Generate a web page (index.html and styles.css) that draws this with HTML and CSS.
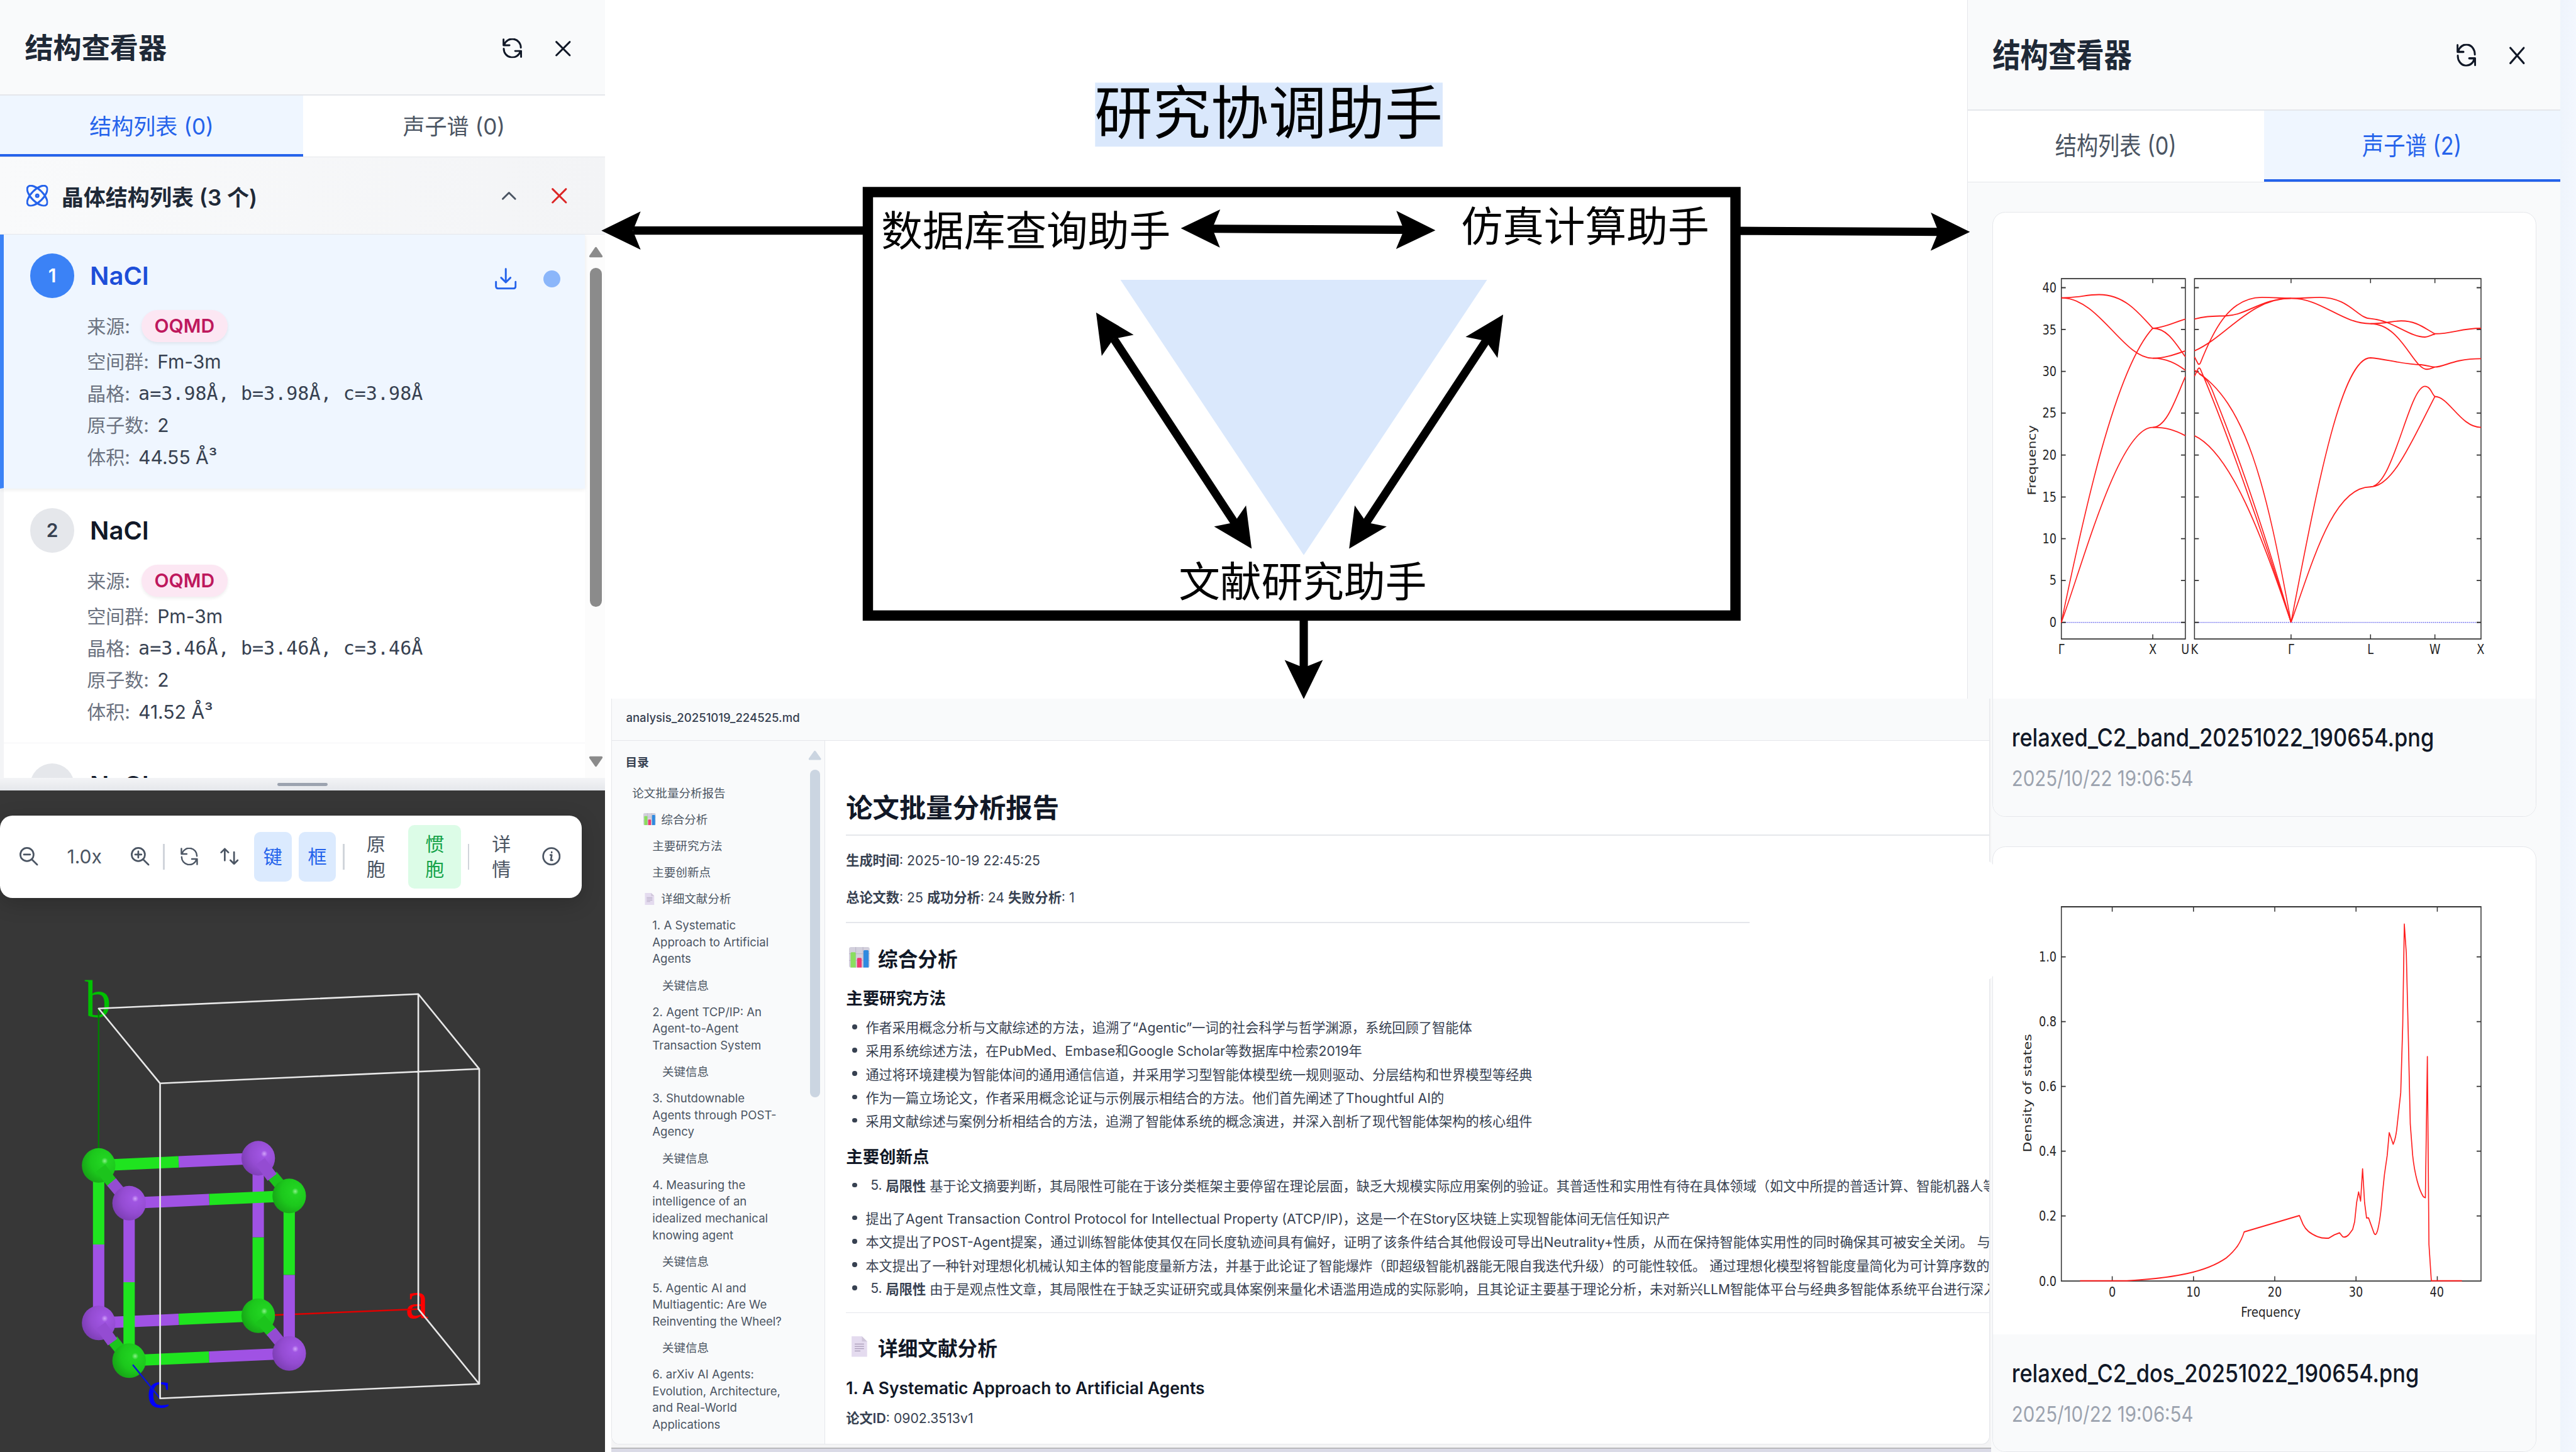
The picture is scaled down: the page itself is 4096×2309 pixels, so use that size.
FILE: index.html
```html
<!DOCTYPE html>
<html lang="zh-CN">
<head>
<meta charset="utf-8">
<title>研究协调助手</title>
<link rel="stylesheet" href="styles.css">
</head>
<body>
<svg class="defs" aria-hidden="true">
  <symbol id="i-refresh" viewBox="0 0 38 38"><path d="M2 2v11.500h11.500M3.500 12A16.500 16.500 0 0 1 35.500 18M36 36V24.500H24.500M34.500 26A16.500 16.500 0 0 1 2.500 20"/></symbol>
  <symbol id="i-x" viewBox="0 0 30 30"><path d="M2 2l26 26M28 2L2 28"/></symbol>
  <symbol id="i-up" viewBox="0 0 30 18"><path d="M3 15L15 3l12 12"/></symbol>
  <symbol id="i-atom" viewBox="0 0 42 42"><ellipse cx="21" cy="21" rx="25" ry="11.500" transform="rotate(45 21 21)"/><ellipse cx="21" cy="21" rx="25" ry="11.500" transform="rotate(-45 21 21)"/><circle cx="21" cy="21" r="2.500"/></symbol>
  <symbol id="i-download" viewBox="0 0 42 42"><path d="M21 2v26M12 19l9 9 9-9M2 27v9a4 4 0 0 0 4 4h30a4 4 0 0 0 4-4v-9"/></symbol>
  <symbol id="i-zoomout" viewBox="0 0 36 36"><circle cx="14.500" cy="14.500" r="12.800"/><path d="M24 24l10.500 10.500M8.500 14.500h12"/></symbol>
  <symbol id="i-zoomin" viewBox="0 0 36 36"><circle cx="14.500" cy="14.500" r="12.800"/><path d="M24 24l10.500 10.500M8.500 14.500h12M14.500 8.500v12"/></symbol>
  <symbol id="i-sort" viewBox="0 0 36 34"><path d="M9 25V2.500M2 9.500l7-7 7 7M27 9v22.500M20 24.500l7 7 7-7"/></symbol>
  <symbol id="i-info" viewBox="0 0 36 36"><circle cx="18" cy="18" r="16"/><path d="M16 15.500h2.500L17 25.500h3M18.500 9.800v.8"/></symbol>
  <symbol id="i-chart" viewBox="0 0 40 40" preserveAspectRatio="none"><rect width="40" height="40" rx="4" fill="#d3d0dc"/><path d="M0 13h40M0 26h40M13 0v40M27 0v40" stroke="#b9b4c6" stroke-width="1.200"/><path d="M3 40V12q0-2 2-2h6q2 0 2 2v28z" fill="#8ade5e"/><path d="M15.500 40V23q0-2 2-2h5q2 0 2 2v17z" fill="#ee3a70"/><path d="M28 40V8q0-2 2-2h6q2 0 2 2v32z" fill="#2f8ae0"/></symbol>
  <symbol id="i-page" viewBox="0 0 40 40" preserveAspectRatio="none"><path d="M5 0h20l10 10v30H5z" fill="#e4dbef"/><path d="M25 0l10 10H25z" fill="#cfc6da"/><path d="M11 15h18M11 19.500h18M11 24h18M11 28.500h11" stroke="#a89cb8" stroke-width="1.500"/></symbol>
</svg>

<main class="board">
  <aside class="viewer viewer-left">
    <header class="viewer-head">
      <h2 class="viewer-title">结构查看器</h2>
      <svg class="icon i38"><use href="#i-refresh"/></svg>
      <svg class="icon i30"><use href="#i-x"/></svg>
    </header>
    <nav class="tabs">
      <div class="tab active"><span>结构列表 (0)</span></div>
      <div class="tab"><span>声子谱 (0)</span></div>
    </nav>
    <div class="list-head">
      <svg class="icon i42 blue"><use href="#i-atom"/></svg>
      <h3 class="list-title">晶体结构列表 (3 个)</h3>
      <svg class="icon chevron"><use href="#i-up"/></svg>
      <svg class="icon i30 red"><use href="#i-x"/></svg>
    </div>
    <div class="list-wrap">
      <div class="list">
        <article class="item selected">
          <div class="item-head"><span class="num">1</span><span class="formula">NaCl</span><svg class="icon i42 blue"><use href="#i-download"/></svg><i class="dot"></i></div>
          <div class="row src"><span class="key">来源:</span><span class="pill">OQMD</span></div>
          <div class="row"><span class="key">空间群:</span><span>Fm-3m</span></div>
          <div class="row"><span class="key">晶格:</span><span class="mono">a=3.98Å, b=3.98Å, c=3.98Å</span></div>
          <div class="row"><span class="key">原子数:</span><span>2</span></div>
          <div class="row"><span class="key">体积:</span><span>44.55 Å³</span></div>
        </article>
        <article class="item">
          <div class="item-head"><span class="num">2</span><span class="formula">NaCl</span></div>
          <div class="row src"><span class="key">来源:</span><span class="pill">OQMD</span></div>
          <div class="row"><span class="key">空间群:</span><span>Pm-3m</span></div>
          <div class="row"><span class="key">晶格:</span><span class="mono">a=3.46Å, b=3.46Å, c=3.46Å</span></div>
          <div class="row"><span class="key">原子数:</span><span>2</span></div>
          <div class="row"><span class="key">体积:</span><span>41.52 Å³</span></div>
        </article>
        <article class="item">
          <div class="item-head"><span class="num"></span><span class="formula">NaCl</span></div>
        </article>
      </div>
      <div class="scrollbar">
        <svg class="arr" viewBox="0 0 28 22"><path d="M14 3L25 19H3z"/></svg>
        <i class="thumb"></i>
        <svg class="arr" viewBox="0 0 28 22"><path d="M14 19L25 3H3z"/></svg>
      </div>
    </div>
    <div class="splitter"><i></i></div>
    <section class="stage">
      <div class="toolbar">
        <svg class="icon i36"><use href="#i-zoomout"/></svg>
        <span class="zoom-level">1.0x</span>
        <svg class="icon i36"><use href="#i-zoomin"/></svg>
        <i class="sep s1"></i>
        <svg class="icon i34"><use href="#i-refresh"/></svg>
        <svg class="icon i36 sort"><use href="#i-sort"/></svg>
        <span class="btn on">键</span>
        <span class="btn on">框</span>
        <i class="sep s2"></i>
        <span class="btn tall">原<br>胞</span>
        <span class="btn tall green">惯<br>胞</span>
        <i class="sep s3"></i>
        <span class="btn tall detail">详<br>情</span>
        <svg class="icon i36"><use href="#i-info"/></svg>
      </div>
      <svg class="scene" viewBox="0 1739 1171 1073">
        <defs>
          <radialGradient id="g" cx=".68" cy=".37" r=".75"><stop offset="0" stop-color="#8cf08c"/><stop offset=".13" stop-color="#22d422"/><stop offset=".55" stop-color="#1cc81c"/><stop offset="1" stop-color="#16a016"/></radialGradient>
          <radialGradient id="p" cx=".68" cy=".37" r=".75"><stop offset="0" stop-color="#d2a4fa"/><stop offset=".13" stop-color="#a055e2"/><stop offset=".55" stop-color="#944cd2"/><stop offset="1" stop-color="#793cb0"/></radialGradient>
        </defs>
        <text x="164" y="1969" class="axis" fill="#00c000">b</text>
        <text x="785" y="2553" class="axis" fill="#f00">a</text>
        <text x="284" y="2725" class="axis" fill="#00f">c</text>
        <path d="M191 1953V2257" stroke="#008000" stroke-width="3"/>
        <path d="M500 2548L810 2535" stroke="#e00000" stroke-width="3"/>
        <g stroke-width="22" fill="none">
          <path d="M191 2257V2410M500 2396V2548M191 2257L346 2250M500 2548L346 2555" stroke="#1fe41f"/>
          <path d="M191 2410V2562M500 2243V2396M346 2250L500 2243M346 2555L191 2562" stroke="#a052e4"/>
        </g>
        <ellipse cx="500" cy="2243" rx="32.500" ry="33.500" fill="url(#p)"/>
        <ellipse cx="191" cy="2257" rx="32.500" ry="33.500" fill="url(#g)"/>
        <ellipse cx="191" cy="2562" rx="32.500" ry="33.500" fill="url(#p)"/>
        <ellipse cx="500" cy="2548" rx="32.500" ry="33.500" fill="url(#g)"/>
        <g stroke-width="22" fill="none">
          <path d="M195 2262L218 2292M527 2276L560 2316M218 2595L250 2635M504 2554L527 2581" stroke="#1cc41c"/>
          <path d="M216 2289L250 2330M504 2249L527 2280M195 2567L218 2599M525 2578L560 2621" stroke="#944cd2"/>
          <path d="M250 2483V2635M560 2316V2469M250 2635L405 2628M560 2316L405 2323" stroke="#1fe41f"/>
          <path d="M250 2330V2483M560 2469V2621M405 2628L560 2621M405 2323L250 2330" stroke="#a052e4"/>
        </g>
        <ellipse cx="250" cy="2330" rx="32.500" ry="33.500" fill="url(#p)"/>
        <ellipse cx="560" cy="2316" rx="32.500" ry="33.500" fill="url(#g)"/>
        <ellipse cx="250" cy="2635" rx="32.500" ry="33.500" fill="url(#g)"/>
        <ellipse cx="560" cy="2621" rx="32.500" ry="33.500" fill="url(#p)"/>
        <path d="M257 2643L310 2708" stroke="#0a14d8" stroke-width="3"/>
        <path class="cell" d="M191 1953L810 1925L928 2070L310 2098ZM810 1925V2535L928 2680V2070M310 2098V2708L928 2680"/>
      </svg>
    </section>
  </aside>

  <div class="center">
    <svg class="diagram" viewBox="1171 0 2638 1353">
      <defs>
        <marker id="head" markerUnits="userSpaceOnUse" markerWidth="160" markerHeight="90" refX="74" refY="37" orient="auto-start-reverse" overflow="visible"><path d="M76 37L0 0L15 37L0 74Z"/></marker>
      </defs>
      <rect x="2120" y="160" width="673" height="124" fill="#dae8fc"/>
      <text class="big" x="2119" y="259" textLength="674">研究协调助手</text>
      <rect x="1680" y="372" width="1680" height="820" fill="none" stroke="#000" stroke-width="20"/>
      <path d="M2169 542H2879L2524 1075Z" fill="#dae8fc"/>
      <text class="mid" x="1706" y="476">数据库查询助手</text>
      <text class="mid" x="2829" y="468">仿真计算助手</text>
      <text class="mid" x="2282" y="1156">文献研究助手</text>
      <g stroke="#000" stroke-width="16" fill="none">
        <path d="M2346 443L2720 445" /><path d="M1225 446.500H1680"/><path d="M3360 447L3755 449"/><path d="M2524 1200V1295"/>
        <path d="M2156 656L2390 1012"/><path d="M2877 660L2645 1012"/>
      </g>
      <g fill="none" stroke="none">
        <path d="M2288 442L2777 446" marker-start="url(#head)" marker-end="url(#head)"/>
        <path d="M1166 446.500H1670" marker-start="url(#head)"/>
        <path d="M3370 447L3812 449" marker-end="url(#head)"/>
        <path d="M2524 1200V1352" marker-end="url(#head)"/>
        <path d="M2123 607L2422 1061" marker-start="url(#head)" marker-end="url(#head)"/>
        <path d="M2909 611L2613 1061" marker-start="url(#head)" marker-end="url(#head)"/>
      </g>
    </svg>

    <section class="report">
      <div class="report-card">
        <header class="report-head">analysis_20251019_224525.md</header>
        <div class="report-body">
          <nav class="toc">
            <div class="toc-list">
              <h4 class="toc-title">目录</h4>
              <a class="t1">论文批量分析报告</a>
              <a class="t2"><svg class="emoji"><use href="#i-chart"/></svg>综合分析</a>
              <a class="t3">主要研究方法</a>
              <a class="t3">主要创新点</a>
              <a class="t2"><svg class="emoji"><use href="#i-page"/></svg>详细文献分析</a>
              <a class="t3">1. A Systematic<br>Approach to Artificial<br>Agents</a>
              <a class="t4">关键信息</a>
              <a class="t3">2. Agent TCP/IP: An<br>Agent-to-Agent<br>Transaction System</a>
              <a class="t4">关键信息</a>
              <a class="t3">3. Shutdownable<br>Agents through POST-<br>Agency</a>
              <a class="t4">关键信息</a>
              <a class="t3">4. Measuring the<br>intelligence of an<br>idealized mechanical<br>knowing agent</a>
              <a class="t4">关键信息</a>
              <a class="t3">5. Agentic AI and<br>Multiagentic: Are We<br>Reinventing the Wheel?</a>
              <a class="t4">关键信息</a>
              <a class="t3">6. arXiv AI Agents:<br>Evolution, Architecture,<br>and Real-World<br>Applications</a>
            </div>
            <div class="toc-scroll">
              <svg class="arr" viewBox="0 0 26 20"><path d="M13 3L23 17H3z"/></svg>
              <i class="thumb"></i>
            </div>
          </nav>
          <article class="doc">
            <h1>论文批量分析报告</h1>
            <p class="p1"><b>生成时间</b>: 2025-10-19 22:45:25</p>
            <p class="p2"><b>总论文数</b>: 25 <b>成功分析</b>: 24 <b>失败分析</b>: 1</p>
            <hr class="hr1">
            <h2 class="h2a"><svg class="emoji"><use href="#i-chart"/></svg>综合分析</h2>
            <h3 class="h3a">主要研究方法</h3>
            <ul class="ul1">
              <li>作者采用概念分析与文献综述的方法，追溯了“Agentic”一词的社会科学与哲学渊源，系统回顾了智能体</li>
              <li>采用系统综述方法，在PubMed、Embase和Google Scholar等数据库中检索2019年</li>
              <li>通过将环境建模为智能体间的通用通信信道，并采用学习型智能体模型统一规则驱动、分层结构和世界模型等经典</li>
              <li>作为一篇立场论文，作者采用概念论证与示例展示相结合的方法。他们首先阐述了Thoughtful AI的</li>
              <li>采用文献综述与案例分析相结合的方法，追溯了智能体系统的概念演进，并深入剖析了现代智能体架构的核心组件</li>
            </ul>
            <h3 class="h3b">主要创新点</h3>
            <ul class="ul2">
              <li class="lim">5. <b>局限性</b> 基于论文摘要判断，其局限性可能在于该分类框架主要停留在理论层面，缺乏大规模实际应用案例的验证。其普适性和实用性有待在具体领域（如文中所提的普适计算、智能机器人等</li>
              <li class="gap">提出了Agent Transaction Control Protocol for Intellectual Property (ATCP/IP)，这是一个在Story区块链上实现智能体间无信任知识产</li>
              <li>本文提出了POST-Agent提案，通过训练智能体使其仅在同长度轨迹间具有偏好，证明了该条件结合其他假设可导出Neutrality+性质，从而在保持智能体实用性的同时确保其可被安全关闭。 与</li>
              <li>本文提出了一种针对理想化机械认知主体的智能度量新方法，并基于此论证了智能爆炸（即超级智能机器能无限自我迭代升级）的可能性较低。 通过理想化模型将智能度量简化为可计算序数的计</li>
              <li class="lim">5. <b>局限性</b> 由于是观点性文章，其局限性在于缺乏实证研究或具体案例来量化术语滥用造成的实际影响，且其论证主要基于理论分析，未对新兴LLM智能体平台与经典多智能体系统平台进行深入</li>
            </ul>
            <hr class="hr2">
            <h2 class="h2b"><svg class="emoji"><use href="#i-page"/></svg>详细文献分析</h2>
            <h3 class="h3c">1. A Systematic Approach to Artificial Agents</h3>
            <p class="p3"><b>论文ID</b>: 0902.3513v1</p>
          </article>
        </div>
      </div>
      <i class="cover"></i>
    </section>
  </div>

  <aside class="viewer viewer-right">
    <header class="viewer-head">
      <h2 class="viewer-title">结构查看器</h2>
      <svg class="icon i38"><use href="#i-refresh"/></svg>
      <svg class="icon i30"><use href="#i-x"/></svg>
    </header>
    <nav class="tabs">
      <div class="tab"><span>结构列表 (0)</span></div>
      <div class="tab active"><span>声子谱 (2)</span></div>
    </nav>
    <div class="cards">
      <article class="card">
        <svg class="plot plot-band" viewBox="103 460 1365 1054" preserveAspectRatio="none">
          <defs>
            <path id="yb" d="M275 0h11M576 0h11M610 0h11M1320 0h11"/>
            <path id="yd" d="M275 0h11M1320 0h11"/>
          </defs>
          <path d="M275 1349H587M610 1349H1331" class="zero"/>
          <g class="frame">
            <path d="M275 603.500H587V1385H275ZM610 603.500H1331V1385H610Z"/>
            <use href="#yb" y="623"/><use href="#yb" y="713.500"/><use href="#yb" y="804.500"/><use href="#yb" y="895"/><use href="#yb" y="986"/><use href="#yb" y="1077"/><use href="#yb" y="1167.500"/><use href="#yb" y="1258"/><use href="#yb" y="1349"/>
            <path d="M505 603v10M505 1385v-10M853 603v10M853 1385v-10M1053 603v10M1053 1385v-10M1215 603v10M1215 1385v-10"/>
          </g>
          <g class="curve">
            <path d="M275 645C320 645 335 638 370 638C430 638 465 672 505 711C530 711 560 698 587 691"/>
            <path d="M275 645C370 645 430 776 505 776C535 776 560 768 587 760"/>
            <path d="M275 1349C330 1120 410 800 505 711C540 711 560 740 587 773"/>
            <path d="M275 1349C330 1220 420 926 505 926C540 926 560 932 587 944"/>
            <path d="M505 926C540 926 562 865 587 816M505 776C540 776 565 788 587 802"/>
            <path d="M610 691C640 684 660 685 690 684C740 683 780 646 853 646"/>
            <path d="M610 760C690 730 750 646 853 646"/>
            <path d="M610 773L619 788Q622 791 625 786C660 710 700 644 780 644C810 644 830 646 853 646"/>
            <path d="M610 802C740 870 790 1050 853 1349"/>
            <path d="M610 815L619 799Q622 795 625 800C680 910 780 1150 853 1349"/>
            <path d="M622 810C645 820 655 845 662 862C720 985 785 1150 853 1349"/>
            <path d="M610 944C700 980 780 1160 853 1349"/>
            <path d="M853 1349C920 1050 980 775 1053 775C1090 777 1130 789 1180 790C1200 792 1205 795 1215 795C1240 795 1260 777 1331 777"/>
            <path d="M853 1349C910 1210 960 1055 1053 1055C1110 1055 1150 837 1190 837C1205 837 1208 856 1215 859"/>
            <path d="M1053 1055C1110 1055 1160 950 1215 859C1250 859 1280 926 1331 926"/>
            <path d="M853 646C890 646 900 644 925 644C1000 644 1020 690 1053 690C1110 694 1150 730 1190 730C1200 730 1207 724 1215 724"/>
            <path d="M853 646C930 646 980 701 1053 701C1090 701 1110 695 1130 695C1170 695 1190 712 1215 723C1260 723 1280 711 1331 711"/>
            <path d="M1053 701C1130 701 1160 800 1195 800C1205 800 1210 796 1215 795"/>
          </g>
          <g class="ticks end">
            <text x="263" y="633">40</text><text x="263" y="724">35</text><text x="263" y="815">30</text><text x="263" y="905">25</text><text x="263" y="996">20</text><text x="263" y="1087">15</text><text x="263" y="1178">10</text><text x="263" y="1268">5</text><text x="263" y="1359">0</text>
          </g>
          <g class="ticks mid-a">
            <text x="275" y="1418">Γ</text><text x="505" y="1418">X</text><text x="587" y="1418">U</text><text x="610" y="1418">K</text><text x="853" y="1418">Γ</text><text x="1053" y="1418">L</text><text x="1215" y="1418">W</text><text x="1330" y="1418">X</text>
            <text transform="translate(211 997) rotate(-90)" textLength="152" lengthAdjust="spacingAndGlyphs">Frequency</text>
          </g>
        </svg>
        <div class="caption"><p class="file"><span>relaxed_C2_band_20251022_190654.png</span></p><p class="date"><span>2025/10/22 19:06:54</span></p></div>
      </article>
      <article class="card">
        <svg class="plot plot-dos" viewBox="103 310 1365 1011" preserveAspectRatio="none">
          <g class="frame">
            <path d="M275 434H1331V1211H275Z"/>
            <use href="#yd" y="538"/><use href="#yd" y="672.500"/><use href="#yd" y="807"/><use href="#yd" y="941.500"/><use href="#yd" y="1076"/>
            <path d="M403 434v10M403 1211v-10M607.500 434v10M607.500 1211v-10M812 434v10M812 1211v-10M1016.500 434v10M1016.500 1211v-10M1221 434v10M1221 1211v-10"/>
          </g>
          <g class="curve">
            <path d="M322 1210.500H440C560 1205 640 1192 690 1163C715 1146 727 1130 735 1109L874 1075L883 1093C890 1105 900 1112 920 1119Q932 1123 948 1122L962 1115L975 1111L983 1119Q990 1122 998 1115L1008 1104L1013 1088L1018 1048L1023 1026L1028 1045L1033 978L1038 1048L1043 1080L1048 1080L1062 1112Q1066 1118 1070 1108Q1078 1085 1083 1030L1088 990L1095 950L1100 903L1105 915L1110 927Q1117 915 1120 888L1129 820L1134 680L1138 470L1143 530L1148 700L1153 885L1159 950C1164 990 1175 1022 1186 1036L1191 1038L1196 745L1200 1135L1206 1210.500H1283"/>
          </g>
          <g class="ticks end">
            <text x="263" y="548">1.0</text><text x="263" y="682">0.8</text><text x="263" y="817">0.6</text><text x="263" y="951">0.4</text><text x="263" y="1086">0.2</text><text x="263" y="1221">0.0</text>
          </g>
          <g class="ticks mid-a">
            <text x="403" y="1243">0</text><text x="607" y="1243">10</text><text x="812" y="1243">20</text><text x="1016" y="1243">30</text><text x="1220" y="1243">40</text>
            <text x="802" y="1285" textLength="150" lengthAdjust="spacingAndGlyphs">Frequency</text>
            <text transform="translate(199 821) rotate(-90)" textLength="246" lengthAdjust="spacingAndGlyphs">Density of states</text>
          </g>
        </svg>
        <div class="caption"><p class="file"><span>relaxed_C2_dos_20251022_190654.png</span></p><p class="date"><span>2025/10/22 19:06:54</span></p></div>
      </article>
    </div>
  </aside>
  <div class="edge"></div>
</main>
</body>
</html>
```
FILE: styles.css
```css
/* 1rem is one hundredth-unit of a 4988-unit wide board */
html { font-size: calc(100vw / 49.88); }
* { box-sizing: border-box; margin: 0; padding: 0; }
body { font-family: Inter, "Noto Sans CJK SC", sans-serif; color: #374151; background: #fff; overflow: hidden; }
.defs { position: absolute; width: 0; height: 0; }
.board { display: grid; grid-template-columns: 11.71rem 26.38rem 11.48rem 1fr; height: 100vh; overflow: hidden; }
.icon { flex: none; fill: none; stroke: currentColor; stroke-width: 3.6; stroke-linecap: round; stroke-linejoin: round; overflow: visible; }
.i30 { width: .3rem; height: .3rem; }
.i34 { width: .34rem; height: .34rem; }
.i36 { width: .36rem; height: .36rem; }
.i38 { width: .38rem; height: .38rem; }
.i42 { width: .42rem; height: .42rem; }
.blue { color: #2563eb; }
.red { color: #dc2626; }

/* viewer panels */
.viewer { display: flex; flex-direction: column; overflow: hidden; height: 100vh; }
.viewer-head { display: flex; align-items: center; flex: none; background: #f9fafb; border-bottom: .03rem solid #e5e7eb; color: #111827; }
.viewer-title { font-size: .55rem; font-weight: 700; line-height: 1; color: #1f2937; margin-right: auto; }
.viewer-left .viewer-head { height: 1.85rem; padding: .05rem .66rem 0 .48rem; gap: .64rem; }
.tabs { display: grid; grid-template-columns: 1fr 1fr; flex: none; background: #fff; border-bottom: .02rem solid #e5e7eb; }
.tab { display: flex; align-items: center; justify-content: center; font-size: .427rem; font-weight: 400; color: #4b5563; border-bottom: .06rem solid transparent; }
.tab.active { color: #2563eb; background: #eff6ff; border-bottom-color: #2563eb; }
.viewer-left .tabs { height: 1.2rem; grid-template-columns: 5.87rem 1fr; }
.list-head { display: flex; align-items: center; flex: none; height: 1.49rem; padding: 0 .73rem 0 .51rem; background: linear-gradient(90deg, #f9fafb, #f3f4f6); border-bottom: .02rem solid #e5e7eb; }
.list-title { font-size: .427rem; font-weight: 600; color: #1f2937; margin: 0 auto 0 .26rem; }
.chevron { width: .3rem; height: .18rem; color: #4b5563; margin-right: .67rem; }
.list-wrap { display: flex; flex: none; height: 10.53rem; overflow: hidden; background: #fff; }
.list { flex: 1; }
.item { height: 4.94rem; border-left: .08rem solid #f3f4f6; border-bottom: .02rem solid #f3f4f6; padding: .38rem .48rem 0 .51rem; background: #fff; }
.item.selected { height: 4.92rem; position: relative; padding-top: .37rem; background: #eff6ff; border-left-color: #3b82f6; border-bottom-color: #eff6ff; box-shadow: 0 .03rem .08rem rgba(0,0,0,.07); }
.item-head { display: flex; align-items: center; height: .86rem; }
.num { display: grid; place-items: center; width: .86rem; height: .86rem; border-radius: 50%; background: #e5e7eb; font-size: .366rem; font-weight: 600; }
.selected .num { background: #3b82f6; color: #fff; }
.formula { font-size: .488rem; font-weight: 600; color: #111827; margin: 0 auto 0 .3rem; }
.selected .formula { color: #1d4ed8; }
.selected .item-head .icon { margin-top: .12rem; }
.dot { width: .33rem; height: .33rem; border-radius: 50%; background: #8bb6fa; margin: .12rem 0 0 .52rem; }
.row { display: flex; align-items: center; height: .615rem; margin-left: 1.1rem; font-size: .366rem; line-height: 1; font-weight: 400; white-space: pre; gap: .16rem; }
.row.src { height: .62rem; margin-top: .24rem; margin-bottom: .07rem; gap: .22rem; }
.key { font-weight: 400; color: #6b7280; }
.pill { height: .62rem; line-height: .62rem; padding: 0 .25rem; border-radius: .31rem; background: #fce7f3; color: #be185d; font-weight: 600; box-shadow: 0 .03rem .06rem rgba(0,0,0,.07); }
.mono { font-family: "DejaVu Sans Mono", monospace; font-weight: 400; }
.scrollbar { width: .38rem; background: #fcfcfc; display: flex; flex-direction: column; align-items: center; padding: .23rem 0 .21rem .04rem; }
.scrollbar .arr { width: .28rem; height: .22rem; fill: #8b8b8b; stroke: #8b8b8b; stroke-width: 4; stroke-linejoin: round; }
.scrollbar .thumb { width: .24rem; height: 6.56rem; border-radius: .12rem; background: #8b8b8b; margin: .2rem 0 auto; }
.splitter { display: grid; place-items: center; flex: none; height: .24rem; background: linear-gradient(#f3f4f6, #e5e7eb); }
.splitter i { width: .98rem; height: .06rem; border-radius: .03rem; background: #9ca3af; }
.stage { flex: 1; display: flex; flex-direction: column; background: #373737; padding-top: .48rem; min-height: 0; }
.toolbar { display: flex; align-items: center; flex: none; width: 11.27rem; height: 1.6rem; padding-left: .38rem; background: #fff; border-radius: .24rem; color: #4b5563; font-size: .366rem; line-height: .49rem; box-shadow: 0 .1rem .4rem rgba(0,0,0,.18); }
.toolbar .icon { stroke-width: 3.3; }
.zoom-level { width: 1.79rem; text-align: center; }
.sep { width: .03rem; height: .5rem; background: #d1d5db; }
.s1 { margin: 0 .31rem 0 .27rem; }
.s2 { margin: 0 .1rem 0 .13rem; }
.s3 { margin: 0 .22rem 0 .13rem; }
.sort { margin: 0 .3rem 0 .42rem; }
.btn { width: .73rem; height: .96rem; display: grid; place-items: center; text-align: center; border-radius: .12rem; }
.btn.on { background: #dbeafe; color: #2563eb; }
.btn.on + .btn.on { margin-left: .13rem; }
.btn.tall { width: 1.02rem; height: 1.23rem; }
.btn.tall.green { background: #dcfce7; color: #16a34a; margin-left: .12rem; }
.btn.tall.detail { width: .8rem; margin-right: .39rem; }
.scene { flex: none; width: 11.71rem; height: 10.73rem; }
.scene .axis { font-family: "Liberation Serif", serif; font-size: 102px; }
.cell { fill: none; stroke: #e8e8e8; stroke-width: 3.2; stroke-linejoin: round; }

/* centre column */
.center { display: flex; flex-direction: column; position: relative; z-index: 2; height: 100vh; }
.diagram { flex: none; width: 26.38rem; height: 13.53rem; overflow: visible; }
.diagram text { font-family: "Noto Sans CJK SC", sans-serif; fill: #000; }
.big { font-size: 112px; }
.mid { font-size: 80px; }
.report { position: relative; flex: none; width: 26.72rem; height: 14.6rem; margin-left: .13rem; padding-bottom: .16rem; background: linear-gradient(#f4f4f5 14.5rem, #b9b9bc 14.5rem, #b9b9bc 14.53rem, #dadae6 14.53rem); }
.report-card { height: 14.44rem; width: 26.69rem; background: #fff; border: .02rem solid #e5e7eb; border-top: 0; border-radius: 0 0 .16rem .16rem; overflow: hidden; }
.report-head { height: .82rem; padding-left: .27rem; line-height: .74rem; font-size: .226rem; font-weight: 500; background: #f9fafb; border-bottom: .02rem solid #e5e7eb; }
.report-body { display: grid; grid-template-columns: 4.12rem 1fr; height: 13.62rem; }
.toc { display: flex; justify-content: space-between; background: #f9fafb; border-right: .02rem solid #e5e7eb; padding-right: .05rem; }
.toc-list { padding: .25rem 0 0 .26rem; }
.toc-title { font-size: .226rem; line-height: .324rem; font-weight: 600; margin-bottom: .27rem; }
.toc a { display: flex; align-items: center; font-size: .226rem; line-height: .324rem; color: #4b5563; margin-bottom: .189rem; white-space: nowrap; }
.t1 { padding-left: .13rem; }
.t2 { padding-left: .35rem; }
.t3 { padding-left: .52rem; }
.t4 { padding-left: .71rem; }
.toc .emoji { width: .24rem; height: .235rem; margin-right: .1rem; }
.toc-scroll { width: .26rem; display: flex; flex-direction: column; align-items: center; padding-top: .18rem; }
.toc-scroll .arr { width: .26rem; height: .2rem; fill: #cbd5e1; stroke: #cbd5e1; stroke-width: 4; stroke-linejoin: round; }
.toc-scroll .thumb { width: .2rem; height: 6.34rem; border-radius: .1rem; background: #cbd5e1; margin-top: .18rem; }
.doc { padding-left: .41rem; font-size: .2583rem; overflow: hidden; white-space: nowrap; }
.doc b { font-weight: 600; }
.doc h1 { margin-top: .88rem; height: .96rem; line-height: .84rem; font-size: .516rem; font-weight: 700; color: #111827; border-bottom: .03rem solid #e5e7eb; }
.doc p { line-height: .36rem; }
.doc hr { border: 0; height: .02rem; background: #e5e7eb; }
.doc h2 { display: flex; align-items: center; height: .5rem; font-size: .385rem; font-weight: 600; color: #111827; }
.doc h3 { line-height: .4rem; font-size: .322rem; font-weight: 600; color: #111827; }
.doc .emoji { width: .4rem; height: .4rem; margin: 0 .16rem 0 .06rem; }
.p1 { margin-top: .3rem; }
.p2 { margin-top: .36rem; }
.hr1 { margin-top: .285rem; }
.h2a { margin-top: .42rem; }
.h3a { margin-top: .335rem; }
.ul1 { margin-top: .13rem; }
.h3b { margin-top: .28rem; }
.ul2 { margin-top: .125rem; }
.hr2 { margin-top: .245rem; }
.h2b { margin-top: .4rem; }
.h3c { margin-top: .35rem; }
.p3 { margin-top: .21rem; }
.doc ul { list-style: none; }
.doc li { display: flex; align-items: center; height: .452rem; white-space: pre; }
.doc li::before { content: ""; flex: none; width: .09rem; height: .09rem; border-radius: 50%; background: #374151; margin: 0 .165rem 0 .125rem; }
.doc li.lim::before { margin-right: .26rem; }
.doc li.gap { margin-top: .185rem; }
/* blank patch that breaks the report's edge beside the second card */
.cover { position: absolute; top: 3.14rem; left: 22.04rem; width: 4.74rem; height: 2.3rem; background: #fff; border-radius: 0 .16rem .16rem 0; }

/* right viewer */
.viewer-right { background: #f9fafb; border-left: .02rem solid #e5e7eb; }
.viewer-right .viewer-head { height: 2.14rem; padding: .03rem .68rem 0 .48rem; gap: .64rem; }
.viewer-right .viewer-head .icon { transform: scaleY(1.14); }
.viewer-right .viewer-title { font-size: .54rem; transform: scaleY(1.17); }
.viewer-right .tabs { height: 1.39rem; }
.viewer-right .tab { font-size: .417rem; padding-bottom: .05rem; }
.viewer-right .tab span, .file span, .date span { display: inline-block; transform: scaleY(1.17); }
.cards { display: flex; flex-direction: column; gap: .58rem; padding: .58rem .46rem 0 .48rem; }
.card { flex: none; border: .02rem solid #e5e7eb; border-radius: .25rem; overflow: hidden; background: #fff; }
.card .plot { display: block; width: 100%; }
.plot-band { height: 9.41rem; }
.plot-dos { height: 9.43rem; }
.caption { height: 2.27rem; padding: .44rem 0 0 .36rem; background: #f9fafb; white-space: nowrap; }
.file { font-size: .419rem; line-height: .64rem; font-weight: 500; color: #111827; }
.date { font-size: .358rem; line-height: .5rem; margin-top: .21rem; color: #9ca3af; }
.frame { fill: none; stroke: #333; stroke-width: 2.4; }
.curve { fill: none; stroke: #ff1f1f; stroke-width: 2.6; stroke-linejoin: round; }
.zero { fill: none; stroke: #7a7af0; stroke-width: 2; stroke-dasharray: 3 2; }
.ticks { font-family: "DejaVu Sans", sans-serif; font-size: 28px; fill: #262626; }
.end { text-anchor: end; }
.mid-a { text-anchor: middle; }
.edge { background: linear-gradient(90deg, #eef4fc, #f3f7fe); }
```
